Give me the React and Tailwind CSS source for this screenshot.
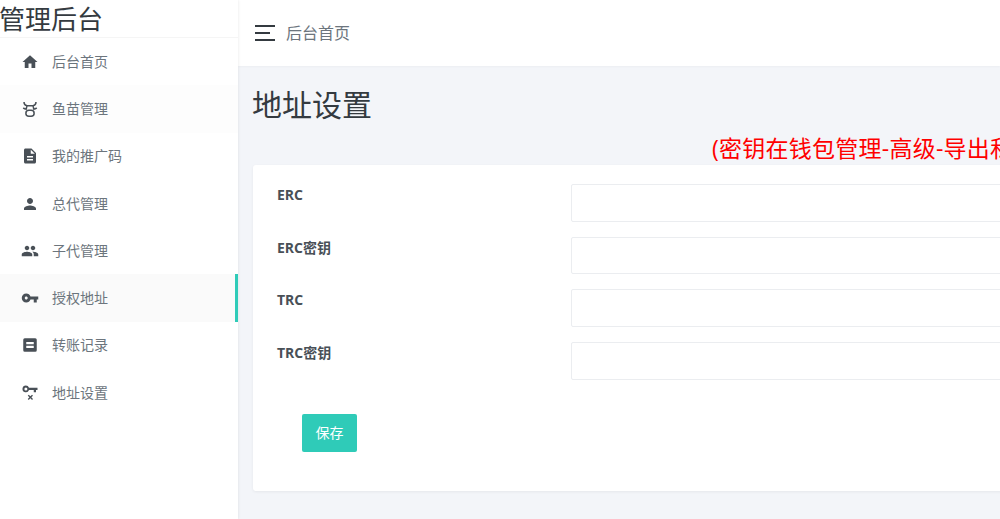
import { MdHome, MdDescription, MdPerson, MdPeople, MdVpnKey } from 'react-icons/md'

const CowIcon = () => (
  <svg viewBox="0 0 24 24" className="w-[18px] h-[18px]" fill="none" stroke="currentColor" strokeWidth="2">
    <path d="M4 2.500c0 3 1.500 4.500 4 5h8c2.500-.5 4-2 4-5" />
    <path d="M8 8c-.8 2-1 3.500-1 5M16 8c.8 2 1 3.500 1 5" />
    <path d="M3 10.500c1 1 2.500 1.500 4 1.500M21 10.500c-1 1-2.500 1.500-4 1.500" />
    <rect x="6.500" y="13.500" width="11" height="8" rx="4" />
    <path d="M10 17.500h.01M14 17.500h.01" />
  </svg>
)

const MemoIcon = () => (
  <svg viewBox="0 0 24 24" className="w-[18px] h-[18px]" fill="currentColor">
    <path fillRule="evenodd" d="M5 3h14a2 2 0 0 1 2 2v14a2 2 0 0 1-2 2H5a2 2 0 0 1-2-2V5a2 2 0 0 1 2-2zm2 5v3h10V8H7zm0 5v3h10v-3H7z" />
  </svg>
)

const KeyRemoveIcon = () => (
  <svg viewBox="0 0 24 24" className="w-[18px] h-[18px]" fill="currentColor">
    <path fillRule="evenodd" d="M6.500 2a4.500 4.500 0 0 1 4.200 3H22v3h-2v3h-3V8h-6.300a4.500 4.500 0 1 1-4.200-6zm0 2.500a2 2 0 1 0 0 4 2 2 0 0 0 0-4z" />
    <path d="M9 15.500l1.300-1.300 2.200 2.200 2.200-2.200 1.300 1.300-2.200 2.200 2.200 2.200-1.300 1.300-2.200-2.200-2.200 2.200L9 19.900l2.200-2.200z" />
  </svg>
)

const menu = [
  { label: '后台首页', icon: <MdHome size={18} /> },
  { label: '鱼苗管理', icon: <CowIcon />, hover: true },
  { label: '我的推广码', icon: <MdDescription size={18} /> },
  { label: '总代管理', icon: <MdPerson size={18} /> },
  { label: '子代管理', icon: <MdPeople size={18} /> },
  { label: '授权地址', icon: <MdVpnKey size={18} />, active: true },
  { label: '转账记录', icon: <MemoIcon /> },
  { label: '地址设置', icon: <KeyRemoveIcon /> },
]

const fields = ['ERC', 'ERC密钥', 'TRC', 'TRC密钥']

const App = () => {
  return (
    <div className="flex h-[519px] w-[1000px] overflow-hidden bg-[#f3f5f9] text-[#495057] font-['Open_Sans','Noto_Sans_CJK_SC',sans-serif]">
      {/* Sidebar */}
      <aside className="w-[238px] shrink-0 bg-white shadow-[0_0_3px_rgba(0,0,0,0.1)] z-10">
        <div className="h-[38px] border-b border-[#f5f5f5] text-[26px] leading-[38px] text-[#343a40] whitespace-nowrap -ml-px">管理后台</div>
        <nav>
          {menu.map((item) => (
            <a
              key={item.label}
              className={`flex items-center h-[47.3px] pl-[21px] text-sm text-[#6c757d] border-r-[3px] ${
                item.active ? 'bg-[#fafafa] border-[#2fcbb8]' : item.hover ? 'bg-[#fdfdfd] border-transparent' : 'border-transparent'
              }`}
            >
              <span className="w-[31px] text-[#495057] flex">{item.icon}</span>
              <span>{item.label}</span>
            </a>
          ))}
        </nav>
      </aside>

      {/* Main */}
      <div className="flex-1 min-w-0 overflow-hidden">
        <header className="h-[66px] bg-white shadow-[0_1px_2px_rgba(0,0,0,0.03)] flex items-center pl-[17px]">
          <div className="w-5 flex flex-col gap-[5px] mr-[11px]">
            <span className="h-0.5 w-5 bg-[#343a40]"></span>
            <span className="h-0.5 w-[15px] bg-[#343a40]"></span>
            <span className="h-0.5 w-5 bg-[#343a40]"></span>
          </div>
          <span className="text-base text-[#6c757d]">后台首页</span>
        </header>

        <div className="pl-[15px] w-[1200px]">
          <h1 className="text-[30px] leading-[40px] pt-[19px] -ml-px text-[#343a40]">地址设置</h1>
          <p className="pl-[459px] pt-[7px] h-[40px] text-[23px] tracking-[0.25px] leading-[32px] text-[#ff0000] whitespace-nowrap">(密钥在钱包管理-高级-导出私钥)</p>

          <div className="bg-white rounded-[3px] shadow-[0_1px_3px_rgba(0,0,0,0.06)] h-[326px] pt-[19px]">
            {fields.map((name) => (
              <div key={name} className="flex h-[37.5px] mb-[15.2px] pl-[25px]">
                <label className="w-[293px] text-sm font-bold text-[#495057] leading-[21px] -ml-px">{name}</label>
                <input className="flex-1 h-[37.5px] ml-px border border-[#ebedf0] rounded-[2px] bg-white" />
              </div>
            ))}
            <button className="block ml-[49px] mt-[34px] w-[55px] h-[38px] rounded-[2px] bg-[#2fcbb8] text-white text-sm">保存</button>
          </div>
        </div>
      </div>
    </div>
  )
}

export default App
